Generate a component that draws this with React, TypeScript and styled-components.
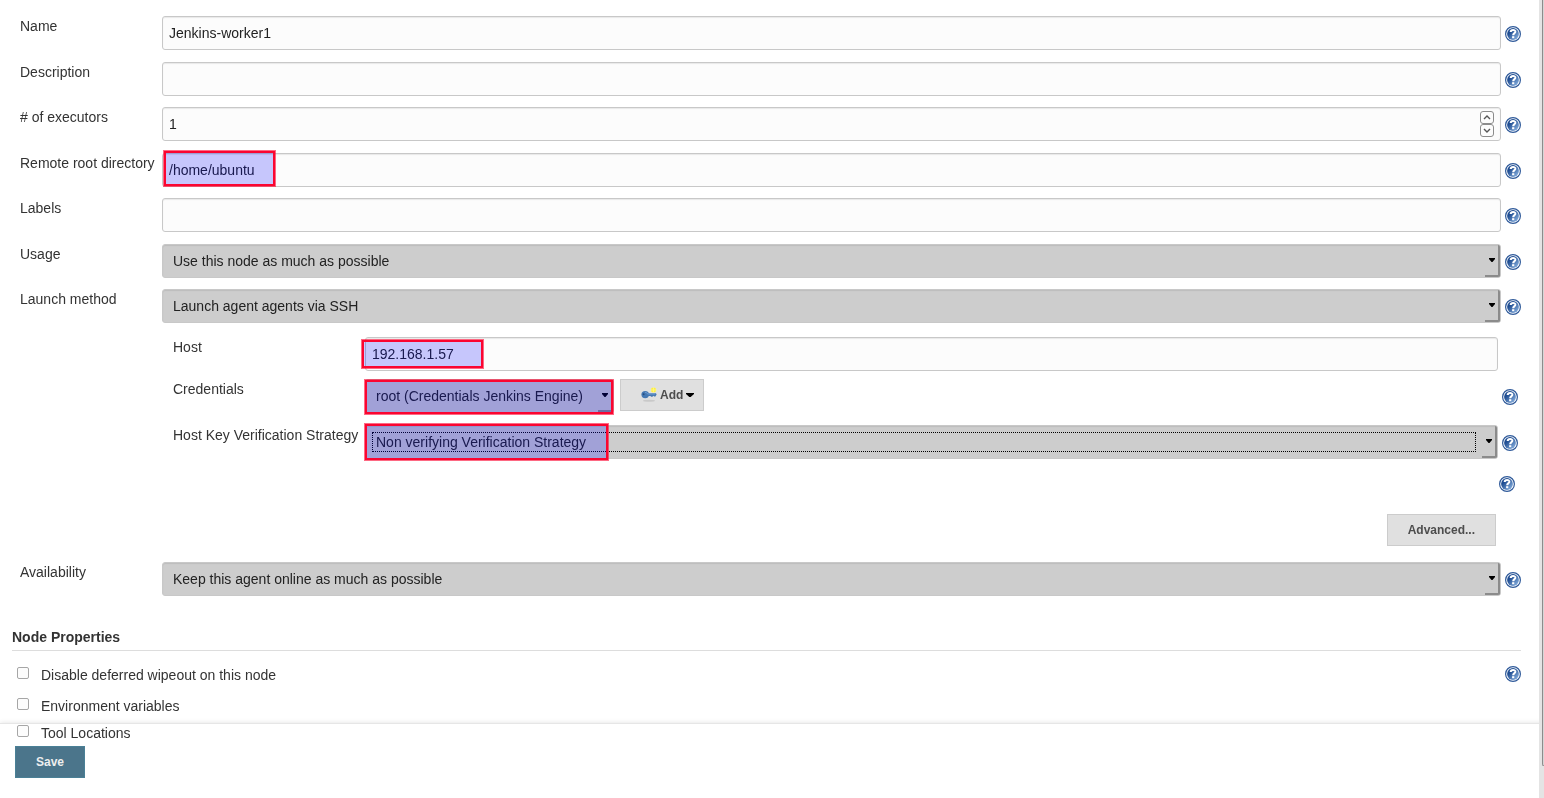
import React, { useId } from "react";
import styled, { createGlobalStyle, css } from "styled-components";

const GlobalStyle = createGlobalStyle`
  * { box-sizing: border-box; }
  body {
    margin: 0;
    background: #fff;
    color: #333;
    font: 14px/18px "Liberation Sans", Helvetica, Arial, sans-serif;
  }
`;

const Page = styled.div`
  display: flex;
  min-height: 100vh;
`;

const Content = styled.form`
  position: relative;
  z-index: 1;
  flex: 1;
  min-width: 0;
  padding: 16px 18px 0 12px;
`;

const ScrollTrack = styled.div`
  position: relative;
  z-index: 1;
  width: 5px;
  padding: 0 0 32px 3px;
  background: #e4e4e4;
  display: flex;
`;

const ScrollThumb = styled.div`
  flex: 1;
  border-left: 1px solid #8c8c8c;
  border-bottom: 1px solid #8c8c8c;
  border-bottom-left-radius: 3px;
  background: #d6d6d6;
`;

const Rows = styled.div`
  display: grid;
  align-content: stretch;
  min-height: 319px;
`;

const Row = styled.div`
  display: grid;
  grid-template-columns: 142px 1fr 16px;
  column-gap: 4px;
  align-items: start;
  padding-left: 8px;
`;

const Label = styled.label`
  margin-right: -4px;
  padding-top: 1px;
  white-space: nowrap;
`;

const Control = styled.div`
  position: relative;
  display: flex;
  min-width: 0;
  margin-left: -4px;
`;

const NestedRows = styled.div`
  padding: 2px 3px 0 161px;
`;

const NestedRow = styled.div<{ $gap?: number }>`
  display: grid;
  grid-template-columns: 192px 1fr 16px;
  column-gap: 4px;
  align-items: start;
  margin-bottom: ${(p) => p.$gap ?? 0}px;
`;

const box = css`
  width: 100%;
  height: 34px;
  border: 1px solid #c8c8c8;
  border-radius: 3px;
  color: #222;
  font: inherit;
  outline: none;
`;

const TextBox = styled.input`
  ${box}
  padding: 0 6px;
  background: #fcfcfc;
  box-shadow: inset 0 1px 1px rgba(0, 0, 0, 0.08);
  appearance: textfield;
  &::-webkit-inner-spin-button { display: none; }
`;

const SelectBox = styled.select`
  ${box}
  padding: 0 24px 0 10px;
  background: #cdcdcd;
  box-shadow: inset 0 1px 1px rgba(0, 0, 0, 0.08);
  appearance: none;
`;

const SelectEdge = styled.span`
  position: absolute;
  right: 1px;
  top: 1px;
  bottom: 1px;
  width: 15px;
  border: solid #8b8b8b;
  border-width: 0 2px 2px 0;
  border-radius: 0 2px 2px 0;
  pointer-events: none;
  display: flex;
  align-items: center;
  justify-content: center;
`;

const FocusRing = styled.span`
  position: absolute;
  inset: 7px 22px 7px 7px;
  border: 1px dotted #000;
  pointer-events: none;
`;

const Highlight = styled.span<{ $x: number; $y: number; $w: number; $h: number }>`
  position: absolute;
  left: ${(p) => p.$x}px;
  top: ${(p) => p.$y}px;
  width: ${(p) => p.$w}px;
  height: ${(p) => p.$h}px;
  border: 2px solid #fb0530;
  box-shadow: 0 0 0 1px rgba(251, 5, 48, 0.6);
  background: rgba(0, 0, 255, 0.21);
  pointer-events: none;
`;

const Stepper = styled.span`
  position: absolute;
  right: 7px;
  top: 4px;
  display: grid;
`;

const StepButton = styled.button`
  width: 14px;
  height: 13px;
  padding: 0;
  border: 1px solid #8c8c8c;
  border-radius: 3px;
  background: #fcfcfc;
  display: flex;
  align-items: center;
  justify-content: center;
`;

const HelpButton = styled.button`
  width: 16px;
  height: 16px;
  margin-top: 10px;
  padding: 0;
  border: 0;
  background: none;
  svg { display: block; }
`;

const Credentials = styled.div`
  display: flex;
  gap: 6px;
`;

const CredentialsSelect = styled(Control)`
  width: 249px;
`;

const Button = styled.button`
  height: 32px;
  padding: 0 20px;
  border: 1px solid #ccc;
  background: #e0e0e0;
  color: #4d4d4d;
  font: bold 12px/16px "Liberation Sans", Helvetica, Arial, sans-serif;
  display: flex;
  align-items: center;
  gap: 3px;
`;

const AddButton = styled(Button)`
  padding: 0 9px 0 20px;
`;

const SaveButton = styled(Button)`
  border-color: #4a8096;
  background: #4b758b;
  color: #eee;
`;

const ExtraHelp = styled.div`
  display: flex;
  justify-content: flex-end;
  padding: 7px 6px 0 0;
`;

const Actions = styled.div`
  display: flex;
  justify-content: flex-end;
  padding: 22px 25px 16px 0;
`;

const Heading = styled.h2`
  margin: 32px 0 15px;
  padding-bottom: 4px;
  border-bottom: 1px solid #ddd;
  font-size: 14px;
  line-height: 18px;
`;

const CheckRow = styled.div<{ $gap: number }>`
  display: flex;
  align-items: flex-start;
  justify-content: space-between;
  height: 18px;
  margin-bottom: ${(p) => p.$gap}px;
`;

const CheckLabel = styled.label`
  display: flex;
  align-items: flex-start;
  gap: 12px;
  padding-left: 5px;
`;

const CheckBox = styled.input`
  appearance: none;
  width: 12px;
  height: 12px;
  margin: 1px 0 0;
  border: 1px solid #a6a6a6;
  border-radius: 2px;
  background: #fcfcfc;
`;

const CheckHelp = styled.div`
  margin-top: -10px;
`;

const SaveBar = styled.footer`
  position: fixed;
  left: 0;
  right: 0;
  bottom: 0;
  height: 75px;
  padding: 22px 15px 0;
  border-top: 1px solid #e6e6e6;
  background: #fff;
  box-shadow: 0 0 5px rgba(0, 0, 0, 0.12);
`;

const SaveSlot = styled.div`
  display: flex;
`;

function Help({ topic }: { topic: string }) {
  const id = useId();
  return (
    <HelpButton type="button" aria-label={`Help for ${topic}`}>
      <svg width="16" height="16" viewBox="0 0 16 16">
        <defs>
          <linearGradient id={id} x1="0.1" y1="0.1" x2="0.9" y2="0.9">
            <stop offset="0.25" stopColor="#1f4d92" />
            <stop offset="1" stopColor="#86aedd" />
          </linearGradient>
        </defs>
        <circle cx="8" cy="8" r="7.4" fill="#fff" stroke="#2f5a9a" strokeWidth="1.2" />
        <circle cx="8" cy="8" r="5.9" fill={`url(#${id})`} />
        <path d="M5.7 6C5.8 3.3 10.6 3.4 10.3 5.9C10.1 7.3 8.2 7.4 8.2 9.3" fill="none" stroke="#fff" strokeWidth="2.1" />
        <rect x="7.1" y="10.2" width="2.2" height="2" fill="#fff" />
      </svg>
    </HelpButton>
  );
}

function Caret({ wide }: { wide?: boolean }) {
  return (
    <svg width={wide ? 8 : 6} height="4" viewBox="0 0 6 4" preserveAspectRatio="none">
      <path d="M0 0H6V1L3.5 4H2.5L0 1Z" fill="#000" />
    </svg>
  );
}

function Select({ id, value, focused }: { id: string; value: string; focused?: boolean }) {
  return (
    <>
      <SelectBox id={id}>
        <option>{value}</option>
      </SelectBox>
      <SelectEdge><Caret /></SelectEdge>
      {focused && <FocusRing />}
    </>
  );
}

function Field({ id, label, children }: { id: string; label: string; children: React.ReactNode }) {
  return (
    <Row>
      <Label htmlFor={id}>{label}</Label>
      <Control>{children}</Control>
      <Help topic={label} />
    </Row>
  );
}

function Key() {
  return (
    <svg width="16" height="16" viewBox="0 0 16 16">
      <ellipse cx="8" cy="13.8" rx="6" ry="1" fill="#c9c9c9" />
      <path d="M5 6.3H15L15.6 7.4L14.4 9.6H13.2L12.4 8.8L11.4 9.8H10.2L9.4 9H5Z" fill="#4679b3" />
      <ellipse cx="4.2" cy="7.6" rx="3.8" ry="3.6" fill="#4679b3" />
      <circle cx="2.6" cy="7.2" r="1" fill="#274f80" />
      <path d="M4 5.4Q5.8 5 6.6 7H14" fill="none" stroke="#79a5d6" strokeWidth="0.8" />
      <rect x="10.2" y="0.8" width="4.6" height="4.4" rx="1.2" fill="#fff13c" />
      <path d="M9.4 3H15.8M12.5 0V6" stroke="#fff68a" strokeWidth="0.8" />
    </svg>
  );
}

export default function App() {
  return (
    <>
      <GlobalStyle />
      <Page>
        <Content id="node" onSubmit={(e) => e.preventDefault()}>
          <Rows>
            <Field id="name" label="Name">
              <TextBox id="name" defaultValue="Jenkins-worker1" />
            </Field>
            <Field id="description" label="Description">
              <TextBox id="description" />
            </Field>
            <Field id="executors" label="# of executors">
              <TextBox id="executors" type="number" defaultValue="1" />
              <Stepper>
                <StepButton type="button" aria-label="Increase">
                  <svg width="8" height="5" viewBox="0 0 8 5"><path d="M1 4L4 1L7 4" fill="none" stroke="#555" strokeWidth="1.4" /></svg>
                </StepButton>
                <StepButton type="button" aria-label="Decrease">
                  <svg width="8" height="5" viewBox="0 0 8 5"><path d="M1 1L4 4L7 1" fill="none" stroke="#555" strokeWidth="1.4" /></svg>
                </StepButton>
              </Stepper>
            </Field>
            <Field id="root-directory" label="Remote root directory">
              <TextBox id="root-directory" defaultValue="/home/ubuntu" />
              <Highlight $x={2} $y={-2} $w={111} $h={35} />
            </Field>
            <Field id="labels" label="Labels">
              <TextBox id="labels" />
            </Field>
            <Field id="usage" label="Usage">
              <Select id="usage" value="Use this node as much as possible" />
            </Field>
            <Field id="launch" label="Launch method">
              <Select id="launch" value="Launch agent agents via SSH" />
            </Field>
          </Rows>

          <NestedRows>
            <NestedRow $gap={8}>
              <Label htmlFor="host">Host</Label>
              <Control>
                <TextBox id="host" defaultValue="192.168.1.57" />
                <Highlight $x={-3} $y={3} $w={121} $h={28} />
              </Control>
            </NestedRow>
            <NestedRow $gap={12}>
              <Label htmlFor="credentials">Credentials</Label>
              <Credentials>
                <CredentialsSelect>
                  <Select id="credentials" value="root (Credentials Jenkins Engine)" />
                  <Highlight $x={0} $y={1} $w={248} $h={34} />
                </CredentialsSelect>
                <AddButton type="button"><Key />Add<Caret wide /></AddButton>
              </Credentials>
              <Help topic="Credentials" />
            </NestedRow>
            <NestedRow>
              <Label htmlFor="strategy">Host Key Verification Strategy</Label>
              <Control>
                <Select id="strategy" value="Non verifying Verification Strategy" focused />
                <Highlight $x={0} $y={-1} $w={243} $h={36} />
              </Control>
              <Help topic="Host Key Verification Strategy" />
            </NestedRow>
          </NestedRows>
          <ExtraHelp><Help topic="Launch method settings" /></ExtraHelp>
          <Actions><Button type="button">Advanced...</Button></Actions>

          <Field id="availability" label="Availability">
            <Select id="availability" value="Keep this agent online as much as possible" />
          </Field>

          <Heading>Node Properties</Heading>
          <CheckRow $gap={13}>
            <CheckLabel><CheckBox type="checkbox" />Disable deferred wipeout on this node</CheckLabel>
            <CheckHelp><Help topic="Disable deferred wipeout" /></CheckHelp>
          </CheckRow>
          <CheckRow $gap={9}>
            <CheckLabel><CheckBox type="checkbox" />Environment variables</CheckLabel>
          </CheckRow>
          <CheckRow $gap={0}>
            <CheckLabel><CheckBox type="checkbox" />Tool Locations</CheckLabel>
          </CheckRow>
        </Content>
        <ScrollTrack><ScrollThumb /></ScrollTrack>
        <SaveBar>
          <SaveSlot><SaveButton type="submit" form="node">Save</SaveButton></SaveSlot>
        </SaveBar>
      </Page>
    </>
  );
}
